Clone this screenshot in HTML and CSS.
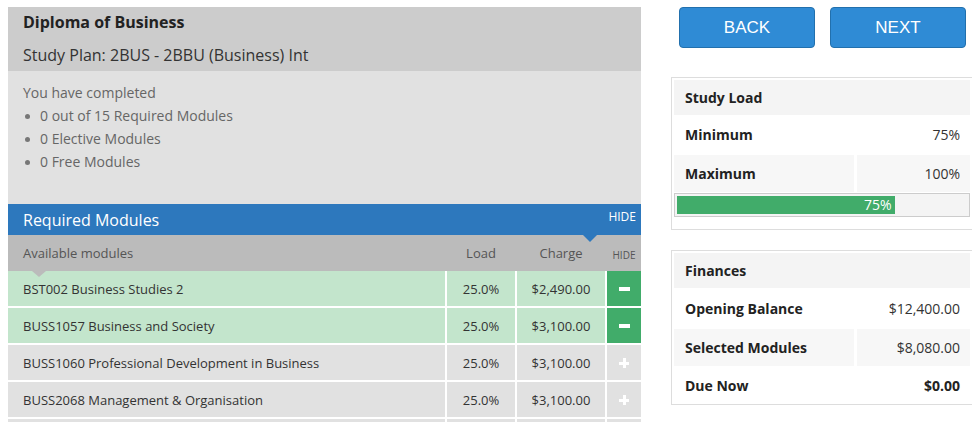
FILE: index.html
```html
<!DOCTYPE html>
<html>
<head>
    <title>Study Plan</title>
    <link rel="stylesheet" href="styles.css">
</head>
<body>
    <div class="page">
        <div class="plan">
            <div class="plan-head">
                <div class="plan-title">Diploma of Business</div>
                <div class="plan-sub">Study Plan: 2BUS - 2BBU (Business) Int</div>
            </div>

            <div class="plan-info">
                <div>You have completed</div>
                <ul class="done-list">
                    <li>0 out of 15 Required Modules</li>
                    <li>0 Elective Modules</li>
                    <li>0 Free Modules</li>
                </ul>
            </div>

            <div class="section-bar">
                <span>Required Modules</span>
                <span class="hide-link">HIDE</span>
            </div>

            <div class="modules">
                <div class="mod-head">
                    <div class="cell name">Available modules</div>
                    <div class="cell">Load</div>
                    <div class="cell">Charge</div>
                    <div class="cell small">HIDE</div>
                    <span class="notch"></span>
                </div>

                <div class="mod-row picked first">
                    <div class="cell name">BST002 Business Studies 2</div>
                    <div class="cell">25.0%</div>
                    <div class="cell">$2,490.00</div>
                    <div class="cell action"><span class="minus"></span></div>
                </div>
                <div class="mod-row picked">
                    <div class="cell name">BUSS1057 Business and Society</div>
                    <div class="cell">25.0%</div>
                    <div class="cell">$3,100.00</div>
                    <div class="cell action"><span class="minus"></span></div>
                </div>
                <div class="mod-row">
                    <div class="cell name">BUSS1060 Professional Development in Business</div>
                    <div class="cell">25.0%</div>
                    <div class="cell">$3,100.00</div>
                    <div class="cell action"><span class="plus"></span></div>
                </div>
                <div class="mod-row">
                    <div class="cell name">BUSS2068 Management &amp; Organisation</div>
                    <div class="cell">25.0%</div>
                    <div class="cell">$3,100.00</div>
                    <div class="cell action"><span class="plus"></span></div>
                </div>
                <div class="mod-row">
                    <div class="cell name"></div>
                    <div class="cell"></div>
                    <div class="cell"></div>
                    <div class="cell action"></div>
                </div>
            </div>
        </div>

        <div class="side">
            <div class="nav-buttons">
                <button class="nav-btn">BACK</button>
                <button class="nav-btn">NEXT</button>
            </div>

            <div class="box">
                <div class="box-head">Study Load</div>
                <div class="box-row">
                    <div class="label">Minimum</div>
                    <div class="value">75%</div>
                </div>
                <div class="box-row shaded">
                    <div class="label">Maximum</div>
                    <div class="value">100%</div>
                </div>
                <div class="progress">
                    <div class="progress-fill" style="width: 75%">75%</div>
                </div>
            </div>

            <div class="box finances">
                <div class="box-head">Finances</div>
                <div class="box-row tall">
                    <div class="label">Opening Balance</div>
                    <div class="value">$12,400.00</div>
                </div>
                <div class="box-row shaded">
                    <div class="label">Selected Modules</div>
                    <div class="value">$8,080.00</div>
                </div>
                <div class="box-row last">
                    <div class="label">Due Now</div>
                    <div class="value strong">$0.00</div>
                </div>
            </div>
        </div>
    </div>
</body>
</html>
```

FILE: styles.css
```css
body {
    margin: 0;
    font-family: "Open Sans", sans-serif;
    color: #333;
    background: #fff;
    overflow: hidden;
}

.page {
    display: flex;
    gap: 30px;
    padding: 7px 0 0 8px;
}

/* left: study plan */

.plan {
    width: 633px;
    flex-shrink: 0;
}

.plan-head {
    background: #cccccc;
    padding: 4px 15px 5px;
    height: 55px;
}

.plan-title {
    font-size: 16px;
    font-weight: bold;
    line-height: 22px;
    color: #222;
}

.plan-sub {
    font-size: 16px;
    line-height: 22px;
    margin-top: 11px;
    color: #333;
}

.plan-info {
    background: #e1e1e1;
    height: 123px;
    padding: 10px 15px 0;
    font-size: 14px;
    line-height: 23px;
    color: #666;
}

.done-list {
    list-style: none;
    margin: 0;
    padding: 0;
}

.done-list li {
    position: relative;
    padding-left: 17px;
}

.done-list li::before {
    content: "";
    position: absolute;
    left: 2px;
    top: 10px;
    width: 5px;
    height: 5px;
    border-radius: 50%;
    background: #777;
}

.section-bar {
    background: #2d78bd;
    color: #fff;
    height: 31px;
    padding: 0 5px 0 15px;
    display: flex;
    justify-content: space-between;
    align-items: center;
    font-size: 16px;
}

.hide-link {
    font-size: 12px;
    margin-top: -6px;
}

.modules {
    background: #fff;
}

.mod-head,
.mod-row {
    display: grid;
    grid-template-columns: 437px 68px 88px 34px;
    column-gap: 2px;
    position: relative;
}

.mod-head {
    background: #bbbbbb;
    height: 36px;
    font-size: 13px;
    color: #555;
}

.mod-row {
    height: 35px;
    margin-bottom: 2px;
    font-size: 13px;
    color: #333;
}

.cell {
    display: flex;
    align-items: center;
    justify-content: center;
}

.cell.name {
    justify-content: flex-start;
    padding-left: 15px;
}

.cell.small {
    font-size: 10px;
    padding-top: 4px;
}

.mod-row .cell {
    background: #e1e1e1;
}

.mod-row.picked .cell {
    background: #c3e5cc;
}

.mod-row.picked .cell.action {
    background: #41ac6a;
}

.notch {
    position: absolute;
    right: 44px;
    top: 0;
    border-left: 7px solid transparent;
    border-right: 7px solid transparent;
    border-top: 7px solid #2d78bd;
}

.mod-row.first::before {
    content: "";
    position: absolute;
    left: 24px;
    top: 0;
    z-index: 1;
    border-left: 7px solid transparent;
    border-right: 7px solid transparent;
    border-top: 6px solid #bbbbbb;
}

.minus {
    width: 11px;
    height: 4px;
    background: #fff;
}

.plus {
    position: relative;
    width: 10px;
    height: 10px;
}

.plus::before,
.plus::after {
    content: "";
    position: absolute;
    background: #fff;
}

.plus::before {
    left: 0;
    top: 4px;
    width: 10px;
    height: 3px;
}

.plus::after {
    left: 4px;
    top: 0;
    width: 3px;
    height: 10px;
}

/* right: buttons and summary boxes */

.side {
    width: 302px;
    flex-shrink: 0;
}

.nav-buttons {
    display: flex;
    gap: 15px;
    padding-left: 8px;
}

.nav-btn {
    width: 136px;
    height: 41px;
    background: #2f8bd5;
    border: 1px solid #2270ad;
    border-radius: 4px;
    color: #fff;
    font-family: "Liberation Sans", Arial, sans-serif;
    font-size: 17px;
    padding: 0;
}

.box {
    margin-top: 29px;
    border: 1px solid #dddddd;
    padding: 2px 2px 12px;
    font-size: 14px;
}

.box.finances {
    margin-top: 20px;
    padding-bottom: 1px;
}

.box-head {
    background: #f4f4f4;
    height: 35px;
    margin-bottom: 1px;
    padding-left: 11px;
    display: flex;
    align-items: center;
    font-weight: bold;
    color: #222;
}

.box-row {
    display: grid;
    grid-template-columns: 180px 1fr;
    column-gap: 3px;
    height: 37px;
    margin-bottom: 2px;
}

.box-row.tall {
    height: 38px;
}

.box-row.last {
    height: 36px;
    margin-top: -1px;
    margin-bottom: 0;
}

.box-row .label,
.box-row .value {
    display: flex;
    align-items: center;
}

.box-row .label {
    padding-left: 11px;
    font-weight: bold;
    color: #222;
}

.box-row .value {
    justify-content: flex-end;
    padding-right: 10px;
    color: #333;
}

.box-row .value.strong {
    font-weight: bold;
    color: #222;
}

.box-row.shaded .label,
.box-row.shaded .value {
    background: #f7f7f7;
}

.progress {
    border: 1px solid #cccccc;
    background: #f4f4f4;
    padding: 2px;
    height: 18px;
    margin-top: -1px;
}

.progress-fill {
    height: 18px;
    background: #41ac6a;
    color: #fff;
    text-align: right;
    font-size: 14px;
    line-height: 18px;
    padding-right: 3px;
    box-sizing: border-box;
}
```
